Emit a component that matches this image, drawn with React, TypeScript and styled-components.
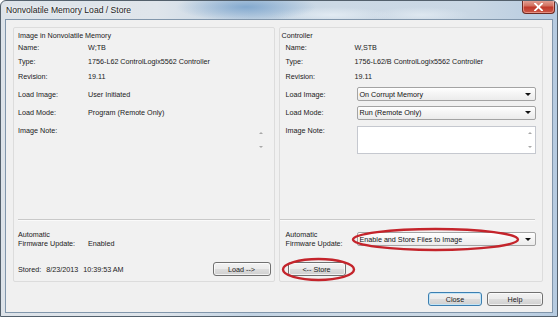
import React from "react";
import styled, { createGlobalStyle } from "styled-components";

const Global = createGlobalStyle`
  html, body { margin: 0; padding: 0; background: #ffffff; }
  body {
    width: 558px; height: 317px; overflow: hidden;
    font-family: "Liberation Sans", Arial, sans-serif;
    -webkit-font-smoothing: antialiased;
  }
`;

const Window = styled.div`
  position: relative;
  width: 558px;
  height: 317px;
  box-sizing: border-box;
  display: flex;
  flex-direction: column;
  border: 1px solid #53606c;
  border-radius: 6px 6px 0 0;
  overflow: hidden;
  background:
    radial-gradient(ellipse 70px 14px at 245px 6px, rgba(110, 155, 200, 0.75), rgba(110, 155, 200, 0) 100%),
    radial-gradient(ellipse 60px 8px at 330px 14px, rgba(235, 242, 248, 0.7), rgba(235, 242, 248, 0) 100%),
    radial-gradient(ellipse 50px 8px at 420px 14px, rgba(235, 242, 248, 0.6), rgba(235, 242, 248, 0) 100%),
    linear-gradient(90deg, #dde3e9 0%, #dfe5eb 28%, #c2d3e3 45%, #ccd9e5 60%, #c9d7e4 85%, #b6cbe0 100%);
`;

const TitleBar = styled.div`
  height: 18px;
  display: flex;
  justify-content: space-between;
  align-items: flex-start;
  flex-shrink: 0;
`;

const Title = styled.span`
  padding: 4px 0 0 5px;
  font-size: 8.6px;
  color: #1b1b1b;
  text-shadow: 0 0 4px rgba(255, 255, 255, 0.95), 0 0 2px rgba(255, 255, 255, 0.9);
`;

const CloseX = styled.div`
  width: 33px;
  height: 14px;
  margin: -1px 2px 0 0;
  box-sizing: border-box;
  border: 1px solid #6d2a22;
  border-top: none;
  border-radius: 0 0 4px 4px;
  background: linear-gradient(#e5a79c 0%, #d2705f 45%, #c0392b 55%, #cc5a48 100%);
  box-shadow: inset 0 0 0 1px rgba(255, 200, 190, 0.5);
  display: flex;
  align-items: center;
  justify-content: center;
`;

const Client = styled.div`
  flex: 1;
  margin: 0 4px 3px 4px;
  border: 1px solid #8196ab;
  background: #f0f0f0;
  display: flex;
  flex-direction: column;
  padding: 7px 9px 0 7px;
`;

const PanelsRow = styled.div`
  display: flex;
  gap: 4px;
  height: 255px;
`;

const Panel = styled.div<{ $w: number; $padL: number; $padR: number }>`
  width: ${(p) => p.$w}px;
  box-sizing: border-box;
  border: 1px solid #dcdcdc;
  border-radius: 2px;
  background: #f1f1f1;
  display: flex;
  flex-direction: column;
  padding: 0 ${(p) => p.$padR}px 2px ${(p) => p.$padL}px;
`;

const GroupTitle = styled.div<{ $shift: number }>`
  height: 11px;
  padding-top: 2px;
  margin-left: ${(p) => p.$shift}px;
  font-size: 7.2px;
  color: #1a1a1a;
  display: flex;
  align-items: center;
`;

const Row = styled.div<{ $h: number; $top?: number }>`
  height: ${(p) => p.$h}px;
  margin-top: ${(p) => p.$top ?? 0}px;
  display: flex;
  align-items: center;
  font-size: 7.2px;
  color: #1a1a1a;
  flex-shrink: 0;
`;

const NoteRow = styled(Row)`
  align-items: flex-start;
`;

const Label = styled.div<{ $w: number }>`
  width: ${(p) => p.$w}px;
  flex-shrink: 0;
  line-height: 9px;
`;

const Value = styled.div<{ $bottom?: boolean }>`
  white-space: nowrap;
  ${(p) => (p.$bottom ? "align-self: flex-end; margin-bottom: 2px;" : "")}
`;

const Combo = styled.div`
  flex: 1;
  height: 14px;
  box-sizing: border-box;
  margin-left: 2px;
  border: 1px solid #a3a3a3;
  border-radius: 2px;
  background: linear-gradient(#ffffff, #f4f4f4 50%, #ebebeb);
  display: flex;
  align-items: center;
  justify-content: space-between;
  padding: 0 4px 0 2px;
  font-size: 7.2px;
  color: #111;
`;

const DropArrow = styled.span`
  width: 0;
  height: 0;
  border-left: 3px solid transparent;
  border-right: 3px solid transparent;
  border-top: 3px solid #111;
`;

const NoteBox = styled.div<{ $bordered: boolean }>`
  flex: 1;
  height: 28px;
  box-sizing: border-box;
  margin-left: 2px;
  border: 1px solid ${(p) => (p.$bordered ? "#c5c8cf" : "transparent")};
  background: ${(p) => (p.$bordered ? "#ffffff" : "transparent")};
  display: flex;
  justify-content: flex-end;
`;

const ScrollCol = styled.div<{ $mr: number }>`
  width: 9px;
  margin-right: ${(p) => p.$mr}px;
  display: flex;
  flex-direction: column;
  justify-content: space-between;
  align-items: center;
  padding: 5px 0 5px;
`;

const Caret = styled.span<{ $up: boolean }>`
  width: 0;
  height: 0;
  border-left: 2px solid transparent;
  border-right: 2px solid transparent;
  ${(p) => (p.$up ? "border-bottom: 2px solid #a8a8a8;" : "border-top: 2px solid #a8a8a8;")}
`;

const Spacer = styled.div`
  flex: 1;
`;

const Separator = styled.div<{ $ml: number; $mr: number }>`
  height: 1px;
  background: #c9c9c9;
  border-bottom: 1px solid #fafafa;
  margin: 0 ${(p) => p.$mr}px 0 ${(p) => p.$ml}px;
`;

const Stored = styled.div`
  flex: 1;
  display: flex;
  gap: 5px;
  font-size: 7.2px;
  color: #1a1a1a;
`;

const Button = styled.button<{ $w: number; $default?: boolean; $ml?: number }>`
  width: ${(p) => p.$w}px;
  height: 14px;
  margin-left: ${(p) => p.$ml ?? 0}px;
  padding: 0;
  box-sizing: border-box;
  border: 1px solid ${(p) => (p.$default ? "#3c7fb1" : "#707070")};
  border-radius: 3px;
  background: linear-gradient(#f2f2f2 0%, #ebebeb 48%, #dddddd 52%, #cfcfcf 100%);
  box-shadow: inset 0 0 0 1px ${(p) => (p.$default ? "#c4e5f6" : "rgba(255,255,255,0.7)")};
  font-family: "Liberation Sans", Arial, sans-serif;
  font-size: 7.2px;
  color: #1a1a1a;
  display: flex;
  align-items: center;
  justify-content: center;
`;

const Footer = styled.div`
  display: flex;
  justify-content: flex-end;
  gap: 5px;
  margin-top: 10px;
`;

const Mark = styled.svg`
  position: absolute;
  pointer-events: none;
`;

function NoteArea({ bordered }: { bordered: boolean }) {
  return (
    <NoteBox $bordered={bordered}>
      <ScrollCol $mr={bordered ? 1 : 4}>
        <Caret $up />
        <Caret $up={false} />
      </ScrollCol>
    </NoteBox>
  );
}

export default function App() {
  return (
    <>
      <Global />
      <Window>
        <TitleBar>
          <Title>Nonvolatile Memory Load / Store</Title>
          <CloseX>
            <svg width="9" height="8" viewBox="0 0 9 8">
              <path d="M1 0.5 L8 7.5 M8 0.5 L1 7.5" stroke="#ffffff" strokeWidth="1.8" strokeLinecap="square" />
            </svg>
          </CloseX>
        </TitleBar>
        <Client>
          <PanelsRow>
            <Panel $w={262} $padL={4} $padR={3}>
              <GroupTitle $shift={0}>Image in Nonvolatile Memory</GroupTitle>
              <Row $h={13}>
                <Label $w={70}>Name:</Label>
                <Value>W;TB</Value>
              </Row>
              <Row $h={15}>
                <Label $w={70}>Type:</Label>
                <Value>1756-L62 ControlLogix5562 Controller</Value>
              </Row>
              <Row $h={15}>
                <Label $w={70}>Revision:</Label>
                <Value>19.11</Value>
              </Row>
              <Row $h={20}>
                <Label $w={70}>Load Image:</Label>
                <Value>User Initiated</Value>
              </Row>
              <Row $h={17}>
                <Label $w={70}>Load Mode:</Label>
                <Value>Program (Remote Only)</Value>
              </Row>
              <NoteRow $h={28} $top={5}>
                <Label $w={70}>Image Note:</Label>
                <NoteArea bordered={false} />
              </NoteRow>
              <Spacer />
              <Separator $ml={0} $mr={1} />
              <Row $h={22} $top={7}>
                <Label $w={70}>
                  Automatic
                  <br />
                  Firmware Update:
                </Label>
                <Value $bottom>Enabled</Value>
              </Row>
              <Row $h={20} $top={9}>
                <Stored>
                  <span>Stored:</span>
                  <span>8/23/2013</span>
                  <span>10:39:53 AM</span>
                </Stored>
                <Button $w={58}>Load --&gt;</Button>
              </Row>
            </Panel>
            <Panel $w={265} $padL={6} $padR={6}>
              <GroupTitle $shift={-4}>Controller</GroupTitle>
              <Row $h={13}>
                <Label $w={69}>Name:</Label>
                <Value>W,STB</Value>
              </Row>
              <Row $h={15}>
                <Label $w={69}>Type:</Label>
                <Value>1756-L62/B ControlLogix5562 Controller</Value>
              </Row>
              <Row $h={15}>
                <Label $w={69}>Revision:</Label>
                <Value>19.11</Value>
              </Row>
              <Row $h={20}>
                <Label $w={69}>Load Image:</Label>
                <Combo>
                  <span>On Corrupt Memory</span>
                  <DropArrow />
                </Combo>
              </Row>
              <Row $h={17}>
                <Label $w={69}>Load Mode:</Label>
                <Combo>
                  <span>Run (Remote Only)</span>
                  <DropArrow />
                </Combo>
              </Row>
              <NoteRow $h={28} $top={5}>
                <Label $w={69}>Image Note:</Label>
                <NoteArea bordered />
              </NoteRow>
              <Spacer />
              <Separator $ml={-6} $mr={1} />
              <Row $h={22} $top={7}>
                <Label $w={69}>
                  Automatic
                  <br />
                  Firmware Update:
                </Label>
                <Combo>
                  <span>Enable and Store Files to Image</span>
                  <DropArrow />
                </Combo>
              </Row>
              <Row $h={20} $top={9}>
                <Button $w={58} $ml={2}>&lt;-- Store</Button>
              </Row>
            </Panel>
          </PanelsRow>
          <Footer>
            <Button $w={54} $default>Close</Button>
            <Button $w={56}>Help</Button>
          </Footer>
        </Client>
        <Mark style={{ left: 350, top: 226 }} width="169" height="25" viewBox="0 0 169 25">
          <ellipse cx="84.5" cy="12.5" rx="82.5" ry="10.5" fill="none" stroke="#c4242b" strokeWidth="2.4" />
        </Mark>
        <Mark style={{ left: 280, top: 256 }} width="75" height="25" viewBox="0 0 75 25">
          <ellipse cx="37.5" cy="12.5" rx="35.5" ry="10.5" fill="none" stroke="#c4242b" strokeWidth="2.4" />
        </Mark>
      </Window>
    </>
  );
}
